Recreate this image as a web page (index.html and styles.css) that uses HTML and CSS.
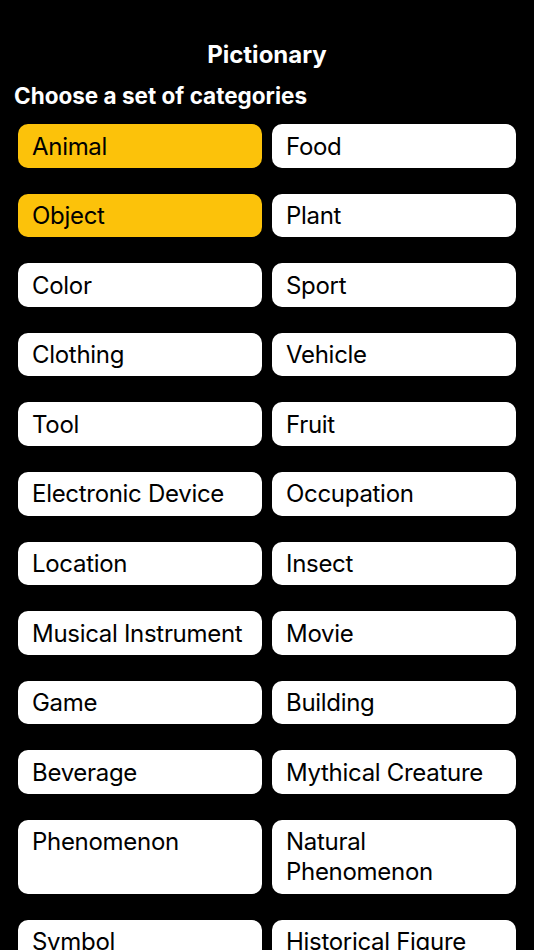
FILE: index.html
```html
<!DOCTYPE html>
<html lang="en">
<head>
<meta charset="utf-8">
<title>Pictionary</title>
<link rel="stylesheet" href="styles.css">
</head>
<body>
<main class="screen">
  <h1 class="title">Pictionary</h1>
  <h2 class="subtitle">Choose a set of categories</h2>
  <div class="categories">
    <button class="category is-selected">Animal</button>
    <button class="category">Food</button>
    <button class="category is-selected">Object</button>
    <button class="category">Plant</button>
    <button class="category">Color</button>
    <button class="category">Sport</button>
    <button class="category">Clothing</button>
    <button class="category">Vehicle</button>
    <button class="category">Tool</button>
    <button class="category">Fruit</button>
    <button class="category">Electronic Device</button>
    <button class="category">Occupation</button>
    <button class="category">Location</button>
    <button class="category">Insect</button>
    <button class="category">Musical Instrument</button>
    <button class="category">Movie</button>
    <button class="category">Game</button>
    <button class="category">Building</button>
    <button class="category">Beverage</button>
    <button class="category">Mythical Creature</button>
    <button class="category">Phenomenon</button>
    <button class="category">Natural Phenomenon</button>
    <button class="category">Symbol</button>
    <button class="category">Historical Figure</button>
  </div>
</main>
</body>
</html>
```
FILE: styles.css
```css
html, body {
  margin: 0;
  padding: 0;
  background: #000;
}

body {
  font-family: Inter, "Noto Sans", sans-serif;
  color: #fff;
}

.screen {
  padding: 40px 0 40px;
}

.title {
  margin: 0;
  font-size: 24px;
  line-height: 30px;
  font-weight: 700;
  text-align: center;
  letter-spacing: 0;
}

.subtitle {
  margin: 12px 0 0;
  padding-left: 14px;
  font-size: 22.5px;
  line-height: 28px;
  font-weight: 700;
  letter-spacing: 0;
}

.categories {
  display: grid;
  grid-template-columns: 1fr 1fr;
  column-gap: 10px;
  row-gap: 26px;
  padding: 0 18px;
  margin-top: 14px;
}

.category {
  appearance: none;
  border: 0;
  margin: 0;
  padding: 7.5px 14px 6.1px;
  border-radius: 10px;
  background: #fff;
  color: #000;
  font-family: inherit;
  font-size: 24px;
  line-height: 30px;
  font-weight: 400;
  letter-spacing: -0.3px;
  text-align: left;
  display: flex;
  align-items: flex-start;
}

.category.is-selected {
  background: #fcc20a;
}
```
